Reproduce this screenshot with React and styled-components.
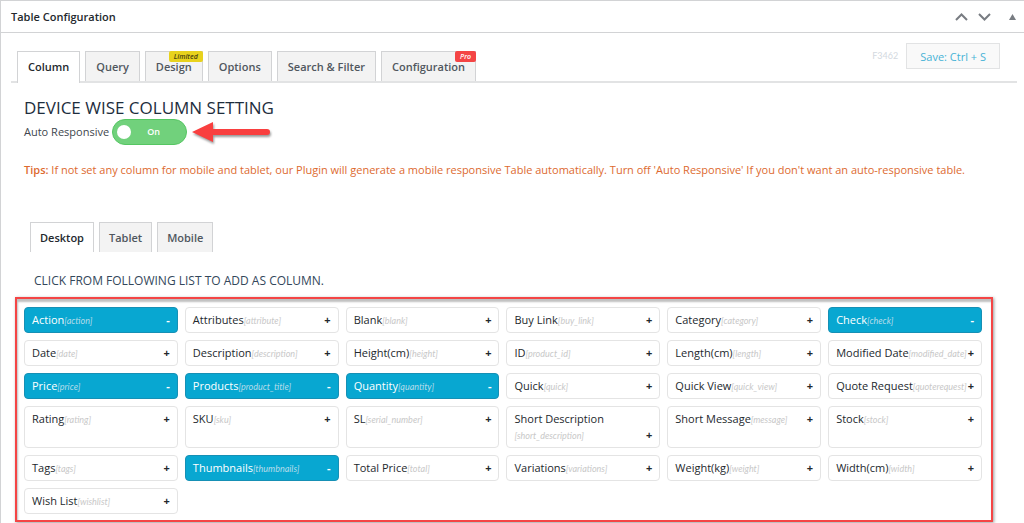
import React, { useState } from "react";
import styled, { createGlobalStyle, ThemeProvider } from "styled-components";

const theme = {
  colors: {
    text: "#23282d",
    muted: "#50575e",
    line: "#d2d3d5",
    lineLight: "#e2e3e4",
    tab: "#f3f3f3",
    blue: "#08a7d1",
    green: "#71d17c",
    greenDark: "#55c662",
    orange: "#dd6a2f",
    red: "#f44545"
  },
  font: `"Open Sans", "Noto Sans", sans-serif`,
  fontSmall: `Lato, "Open Sans", sans-serif`
};

const GlobalStyle = createGlobalStyle`
  * {
    box-sizing: border-box;
  }
  body {
    margin: 0;
    background: #fff;
    color: ${theme.colors.text};
    font-family: ${theme.font};
    font-size: 11px;
    line-height: 16px;
  }
  button {
    font-family: inherit;
    cursor: pointer;
  }
`;

const Panel = styled.main`
  min-height: 100vh;
  border-top: 1px solid ${props => props.theme.colors.line};
  border-left: 1px solid ${props => props.theme.colors.line};
`;

const PanelHeader = styled.header`
  display: flex;
  align-items: center;
  height: 32px;
  padding: 0 8px 0 10px;
  border-bottom: 1px solid ${props => props.theme.colors.line};
`;

const PanelTitle = styled.h1`
  flex: 1;
  margin: 0;
  font-size: 11px;
  font-weight: 600;
`;

const IconButton = styled.button`
  display: flex;
  align-items: center;
  justify-content: center;
  width: ${props => props.$width || 23}px;
  height: 24px;
  margin-left: ${props => props.$gap || 0}px;
  padding: 0;
  border: 0;
  background: none;
  color: #787c82;
`;

const Toolbar = styled.div`
  display: flex;
  align-items: flex-end;
  height: 50px;
  margin: 0 7px 0 10px;
  border-bottom: 2px solid ${props => props.theme.colors.lineLight};
`;

const TabList = styled.nav`
  display: flex;
  gap: 5px;
  padding-left: 6px;
  margin-bottom: ${props => (props.$joined ? -2 : 0)}px;
`;

const Tab = styled.a`
  position: relative;
  height: ${props => (props.$joined && props.$active ? 32 : 30)}px;
  padding: 7px ${props => (props.$joined ? 10 : 9)}px 0;
  border: 1px solid ${props => props.theme.colors.line};
  border-bottom: 0;
  background: ${props => (props.$active ? "#fff" : props.theme.colors.tab)};
  color: ${props =>
    props.$active ? props.theme.colors.text : props.theme.colors.muted};
  font-weight: 600;
  text-decoration: none;
  white-space: nowrap;
`;

const Badge = styled.span`
  position: absolute;
  top: -1px;
  right: -1px;
  padding: 0 5px;
  border-radius: 2px;
  background: ${props => (props.$pro ? props.theme.colors.red : "#e8d21d")};
  color: ${props => (props.$pro ? "#fff" : "#4a4210")};
  font-size: 7px;
  font-style: italic;
  line-height: 11px;
`;

const SaveArea = styled.div`
  display: flex;
  flex: 1;
  align-items: center;
  justify-content: flex-end;
  gap: 8px;
  padding: 0 17px 12px 0;
`;

const FormCode = styled.span`
  color: #d3d9e0;
  font-family: ${props => props.theme.fontSmall};
  font-size: 9px;
`;

const SaveButton = styled.button`
  height: 26px;
  padding: 0 13px;
  border: 1px solid ${props => props.theme.colors.lineLight};
  background: #f9f9f9;
  color: #47b3d6;
  font-size: 11px;
`;

const Content = styled.section`
  padding: 15px 31px 0 23px;
`;

const Heading = styled.h2`
  margin: 0;
  color: #1d2d3d;
  font-size: 17px;
  font-weight: 400;
  line-height: 20px;
`;

const SwitchRow = styled.div`
  display: flex;
  align-items: center;
  gap: 3px;
  height: 28px;
  color: #40464d;
`;

const Switch = styled.span`
  position: relative;
  display: block;
  width: 75px;
  height: 26px;
`;

const SwitchInput = styled.input`
  position: absolute;
  inset: 0;
  z-index: 1;
  width: 100%;
  height: 100%;
  margin: 0;
  opacity: 0;
  cursor: pointer;
`;

const SwitchTrack = styled.span`
  display: flex;
  align-items: center;
  flex-direction: ${props => (props.$on ? "row" : "row-reverse")};
  height: 100%;
  padding: 0 4px;
  border: 1px solid
    ${props => (props.$on ? props.theme.colors.greenDark : "#b5b5b5")};
  border-radius: 13px;
  background: ${props => (props.$on ? props.theme.colors.green : "#ccc")};
  color: #fff;
  font-size: 9px;
  font-weight: 600;
`;

const SwitchKnob = styled.span`
  width: 14px;
  height: 14px;
  border-radius: 50%;
  background: #fff;
`;

const SwitchText = styled.span`
  flex: 1;
  padding-right: 6px;
  text-align: center;
`;

const Tips = styled.p`
  margin: 16px 0 44px;
  color: ${props => props.theme.colors.orange};

  b {
    font-weight: 600;
  }
`;

const ListTitle = styled.h3`
  margin: 21px 0 8px 10px;
  color: #33475b;
  font-size: 12px;
  font-weight: 400;
`;

const Picker = styled.div`
  display: grid;
  grid-template-columns: repeat(6, 1fr);
  gap: 7px;
  margin: 0 0 0 -9px;
  padding: 8px 9px 6px 7px;
  border: 2px solid ${props => props.theme.colors.red};
  box-shadow: 1px 1px 3px rgba(0, 0, 0, 0.4),
    inset 1px 3px 2px rgba(0, 0, 0, 0.25);
`;

const ColumnButton = styled.button`
  display: flex;
  flex-wrap: wrap;
  align-content: flex-start;
  align-items: baseline;
  min-height: 26px;
  padding: 4px 7px;
  border: 1px solid ${props => (props.$added ? "#1690b5" : "#e4e4e4")};
  border-radius: 4px;
  background: ${props => (props.$added ? props.theme.colors.blue : "#fff")};
  color: ${props => (props.$added ? "#fff" : props.theme.colors.text)};
  font-size: 11px;
  line-height: 16px;
  text-align: left;
`;

const Keyword = styled.i`
  color: ${props => (props.$added ? "#b5dcea" : "#c8c8c8")};
  font-family: ${props => props.theme.fontSmall};
  font-size: 9px;
  line-height: 12px;
`;

const Sign = styled.b`
  margin-left: auto;
`;

const ArrowDrawing = styled.svg`
  display: block;
  overflow: visible;
  margin-left: 2px;
  filter: drop-shadow(1px 2px 1px rgba(0, 0, 0, 0.4));
`;

const Arrow = () => (
  <ArrowDrawing width="79" height="22" viewBox="0 0 79 22" aria-hidden="true">
    <path d="M0 11 L21 1 V8 H75 Q78 8 78 11 Q78 14 75 14 H21 V21 Z" fill="#f93f3f" />
  </ArrowDrawing>
);

const Chevron = ({ down }) => (
  <svg width="13" height="8" viewBox="0 0 13 8" aria-hidden="true">
    <path
      d={down ? "M1 1 L6.5 6.5 L12 1" : "M1 7 L6.5 1.5 L12 7"}
      fill="none"
      stroke="currentColor"
      strokeWidth="2"
    />
  </svg>
);

const mainTabs = [
  { label: "Column" },
  { label: "Query" },
  { label: "Design", badge: "Limited" },
  { label: "Options" },
  { label: "Search & Filter" },
  { label: "Configuration", badge: "Pro" }
];

const deviceTabs = ["Desktop", "Tablet", "Mobile"];

const columns = [
  ["Action", "action"],
  ["Attributes", "attribute"],
  ["Blank", "blank"],
  ["Buy Link", "buy_link"],
  ["Category", "category"],
  ["Check", "check"],
  ["Date", "date"],
  ["Description", "description"],
  ["Height(cm)", "height"],
  ["ID", "product_id"],
  ["Length(cm)", "length"],
  ["Modified Date", "modified_date"],
  ["Price", "price"],
  ["Products", "product_title"],
  ["Quantity", "quantity"],
  ["Quick", "quick"],
  ["Quick View", "quick_view"],
  ["Quote Request", "quoterequest"],
  ["Rating", "rating"],
  ["SKU", "sku"],
  ["SL", "serial_number"],
  ["Short Description", "short_description"],
  ["Short Message", "message"],
  ["Stock", "stock"],
  ["Tags", "tags"],
  ["Thumbnails", "thumbnails"],
  ["Total Price", "total"],
  ["Variations", "variations"],
  ["Weight(kg)", "weight"],
  ["Width(cm)", "width"],
  ["Wish List", "wishlist"]
];

const App = () => {
  const [tab, setTab] = useState("Column");
  const [device, setDevice] = useState("Desktop");
  const [responsive, setResponsive] = useState(true);
  const [added, setAdded] = useState([
    "action",
    "check",
    "price",
    "product_title",
    "quantity",
    "thumbnails"
  ]);

  const toggleColumn = keyword =>
    setAdded(
      added.includes(keyword)
        ? added.filter(item => item !== keyword)
        : [...added, keyword]
    );

  return (
    <ThemeProvider theme={theme}>
      <GlobalStyle />
      <Panel>
        <PanelHeader>
          <PanelTitle>Table Configuration</PanelTitle>
          <IconButton type="button" aria-label="Move up">
            <Chevron />
          </IconButton>
          <IconButton type="button" aria-label="Move down">
            <Chevron down />
          </IconButton>
          <IconButton type="button" aria-label="Toggle panel" $width={8} $gap={12}>
            <svg width="7" height="6" viewBox="0 0 7 6" aria-hidden="true">
              <path d="M3.5 0 L7 6 H0 Z" fill="currentColor" />
            </svg>
          </IconButton>
        </PanelHeader>

        <Toolbar>
          <TabList $joined>
            {mainTabs.map(({ label, badge }) => (
              <Tab
                key={label}
                href="#"
                $joined
                $active={label === tab}
                onClick={() => setTab(label)}
              >
                {label}
                {badge && <Badge $pro={badge === "Pro"}>{badge}</Badge>}
              </Tab>
            ))}
          </TabList>
          <SaveArea>
            <FormCode>F3462</FormCode>
            <SaveButton type="button">Save: Ctrl + S</SaveButton>
          </SaveArea>
        </Toolbar>

        <Content>
          <Heading>DEVICE WISE COLUMN SETTING</Heading>
          <SwitchRow>
            <label htmlFor="auto-responsive">Auto Responsive</label>
            <Switch>
              <SwitchInput
                id="auto-responsive"
                type="checkbox"
                checked={responsive}
                onChange={() => setResponsive(!responsive)}
              />
              <SwitchTrack $on={responsive}>
                <SwitchKnob />
                <SwitchText>{responsive ? "On" : "Off"}</SwitchText>
              </SwitchTrack>
            </Switch>
            <Arrow />
          </SwitchRow>
          <Tips>
            <b>Tips:</b> If not set any column for mobile and tablet, our Plugin
            will generate a mobile responsive Table automatically. Turn off 'Auto
            Responsive' If you don't want an auto-responsive table.
          </Tips>

          <TabList>
            {deviceTabs.map(label => (
              <Tab
                key={label}
                href="#"
                $active={label === device}
                onClick={() => setDevice(label)}
              >
                {label}
              </Tab>
            ))}
          </TabList>

          <ListTitle>CLICK FROM FOLLOWING LIST TO ADD AS COLUMN.</ListTitle>
          <Picker>
            {columns.map(([label, keyword]) => {
              const isAdded = added.includes(keyword);
              return (
                <ColumnButton
                  key={keyword}
                  type="button"
                  aria-pressed={isAdded}
                  $added={isAdded}
                  onClick={() => toggleColumn(keyword)}
                >
                  <span>{label}</span>
                  <Keyword $added={isAdded}>[{keyword}]</Keyword>
                  <Sign>{isAdded ? "-" : "+"}</Sign>
                </ColumnButton>
              );
            })}
          </Picker>
        </Content>
      </Panel>
    </ThemeProvider>
  );
};

export default App;
